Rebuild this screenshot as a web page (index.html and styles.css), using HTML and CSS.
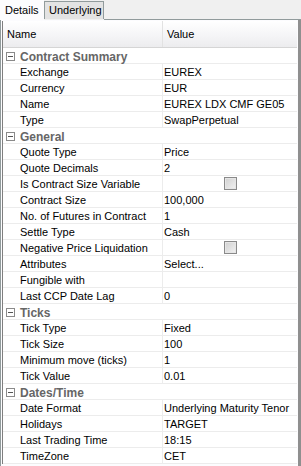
FILE: index.html
```html
<!DOCTYPE html>
<html>
<head>
<meta charset="utf-8">
<link rel="stylesheet" href="styles.css">
</head>
<body>
<div class="tabs">
  <div class="tab active">Details</div>
  <div class="tab">Underlying</div>
  <div class="tabfill"></div>
</div>
<div class="panel">
  <div class="grid">
    <div class="head">
      <div class="hname">Name</div>
      <div class="hval">Value</div>
    </div>
    <div class="group"><span class="box"></span>Contract Summary</div>
    <div class="row"><div class="n">Exchange</div><div class="v">EUREX</div></div>
    <div class="row"><div class="n">Currency</div><div class="v">EUR</div></div>
    <div class="row"><div class="n">Name</div><div class="v">EUREX LDX CMF GE05</div></div>
    <div class="row"><div class="n">Type</div><div class="v">SwapPerpetual</div></div>
    <div class="group"><span class="box"></span>General</div>
    <div class="row"><div class="n">Quote Type</div><div class="v">Price</div></div>
    <div class="row"><div class="n">Quote Decimals</div><div class="v">2</div></div>
    <div class="row"><div class="n">Is Contract Size Variable</div><div class="v center"><span class="chk"></span></div></div>
    <div class="row"><div class="n">Contract Size</div><div class="v">100,000</div></div>
    <div class="row"><div class="n">No. of Futures in Contract</div><div class="v">1</div></div>
    <div class="row"><div class="n">Settle Type</div><div class="v">Cash</div></div>
    <div class="row"><div class="n">Negative Price Liquidation</div><div class="v center"><span class="chk"></span></div></div>
    <div class="row"><div class="n">Attributes</div><div class="v">Select...</div></div>
    <div class="row"><div class="n">Fungible with</div><div class="v"></div></div>
    <div class="row"><div class="n">Last CCP Date Lag</div><div class="v">0</div></div>
    <div class="group"><span class="box"></span>Ticks</div>
    <div class="row"><div class="n">Tick Type</div><div class="v">Fixed</div></div>
    <div class="row"><div class="n">Tick Size</div><div class="v">100</div></div>
    <div class="row"><div class="n">Minimum move (ticks)</div><div class="v">1</div></div>
    <div class="row"><div class="n">Tick Value</div><div class="v">0.01</div></div>
    <div class="group"><span class="box"></span>Dates/Time</div>
    <div class="row"><div class="n">Date Format</div><div class="v">Underlying Maturity Tenor</div></div>
    <div class="row"><div class="n">Holidays</div><div class="v">TARGET</div></div>
    <div class="row"><div class="n">Last Trading Time</div><div class="v">18:15</div></div>
    <div class="row"><div class="n">TimeZone</div><div class="v">CET</div></div>
  </div>
</div>
</body>
</html>
```
FILE: styles.css
```css
html, body {
  margin: 0;
  padding: 0;
  background: #f0f0f0;
  font-family: "Liberation Sans", Arial, sans-serif;
  font-size: 11px;
  color: #000;
}
.tabs {
  display: flex;
  height: 20px;
  align-items: flex-end;
}
.tab {
  box-sizing: border-box;
  line-height: 16px;
}
.tab.active {
  width: 44px;
  height: 20px;
  background: #fcfcfe;
  padding: 2px 0 0 5px;
}
.tab:not(.active) {
  width: 60px;
  height: 18px;
  background: #e3e3e3;
  border: 1px solid #919b9c;
  border-bottom: none;
  margin-bottom: 1px;
  padding: 0 0 0 4px;
}
.tabfill {
  flex: 1;
  height: 1px;
  border-bottom: 1px solid #919b9c;
}
.panel {
  background: #fcfcfe;
  border-left: 1px solid #919b9c;
  border-right: 3px solid #8f8f8f;
  height: 446px;
  box-sizing: border-box;
  padding: 1px 0 0 1px;
}
.grid {
  background: #fff;
  border-left: 1px solid #7f7f7f;
  margin-right: 1px;
}
.head {
  display: flex;
  height: 26px;
  background: linear-gradient(#ffffff, #f4f4f6 60%, #ececee);
  border-bottom: 1px solid #d5d5d5;
  align-items: center;
}
.hname {
  width: 155px;
  padding-left: 4px;
  border-right: 1px solid #e2e2e2;
  height: 26px;
  line-height: 27px;
}
.hval {
  padding-left: 4px;
  line-height: 27px;
}
.group {
  height: 16px;
  box-sizing: border-box;
  border-bottom: 1px solid #ececec;
  font-weight: bold;
  color: #666;
  display: flex;
  align-items: center;
  font-size: 12px;
  padding: 2px 0 0 3px;
}
.box {
  width: 7px;
  height: 7px;
  border: 1px solid #8a8a8a;
  margin-right: 5px;
  position: relative;
  background: #fff;
}
.box::after {
  content: "";
  position: absolute;
  left: 1px;
  top: 3px;
  width: 5px;
  height: 1px;
  background: #555;
}
.row {
  display: flex;
  height: 16px;
  box-sizing: border-box;
  border-bottom: 1px solid #ececec;
}
.n {
  width: 142px;
  padding: 2px 0 0 17px;
  border-right: 1px solid #ececec;
  line-height: 13px;
  white-space: nowrap;
  overflow: hidden;
}
.v {
  flex: 1;
  padding: 2px 0 0 1px;
  line-height: 13px;
  white-space: nowrap;
  overflow: hidden;
}
.v.center {
  display: flex;
  justify-content: center;
  align-items: center;
  padding: 0;
}
.chk {
  width: 11px;
  height: 11px;
  border: 1px solid #8a8a8a;
  background: linear-gradient(135deg, #d0d0d0, #f2f2f2);
  box-shadow: inset 0 0 0 1px #e6e6e6;
}
```
